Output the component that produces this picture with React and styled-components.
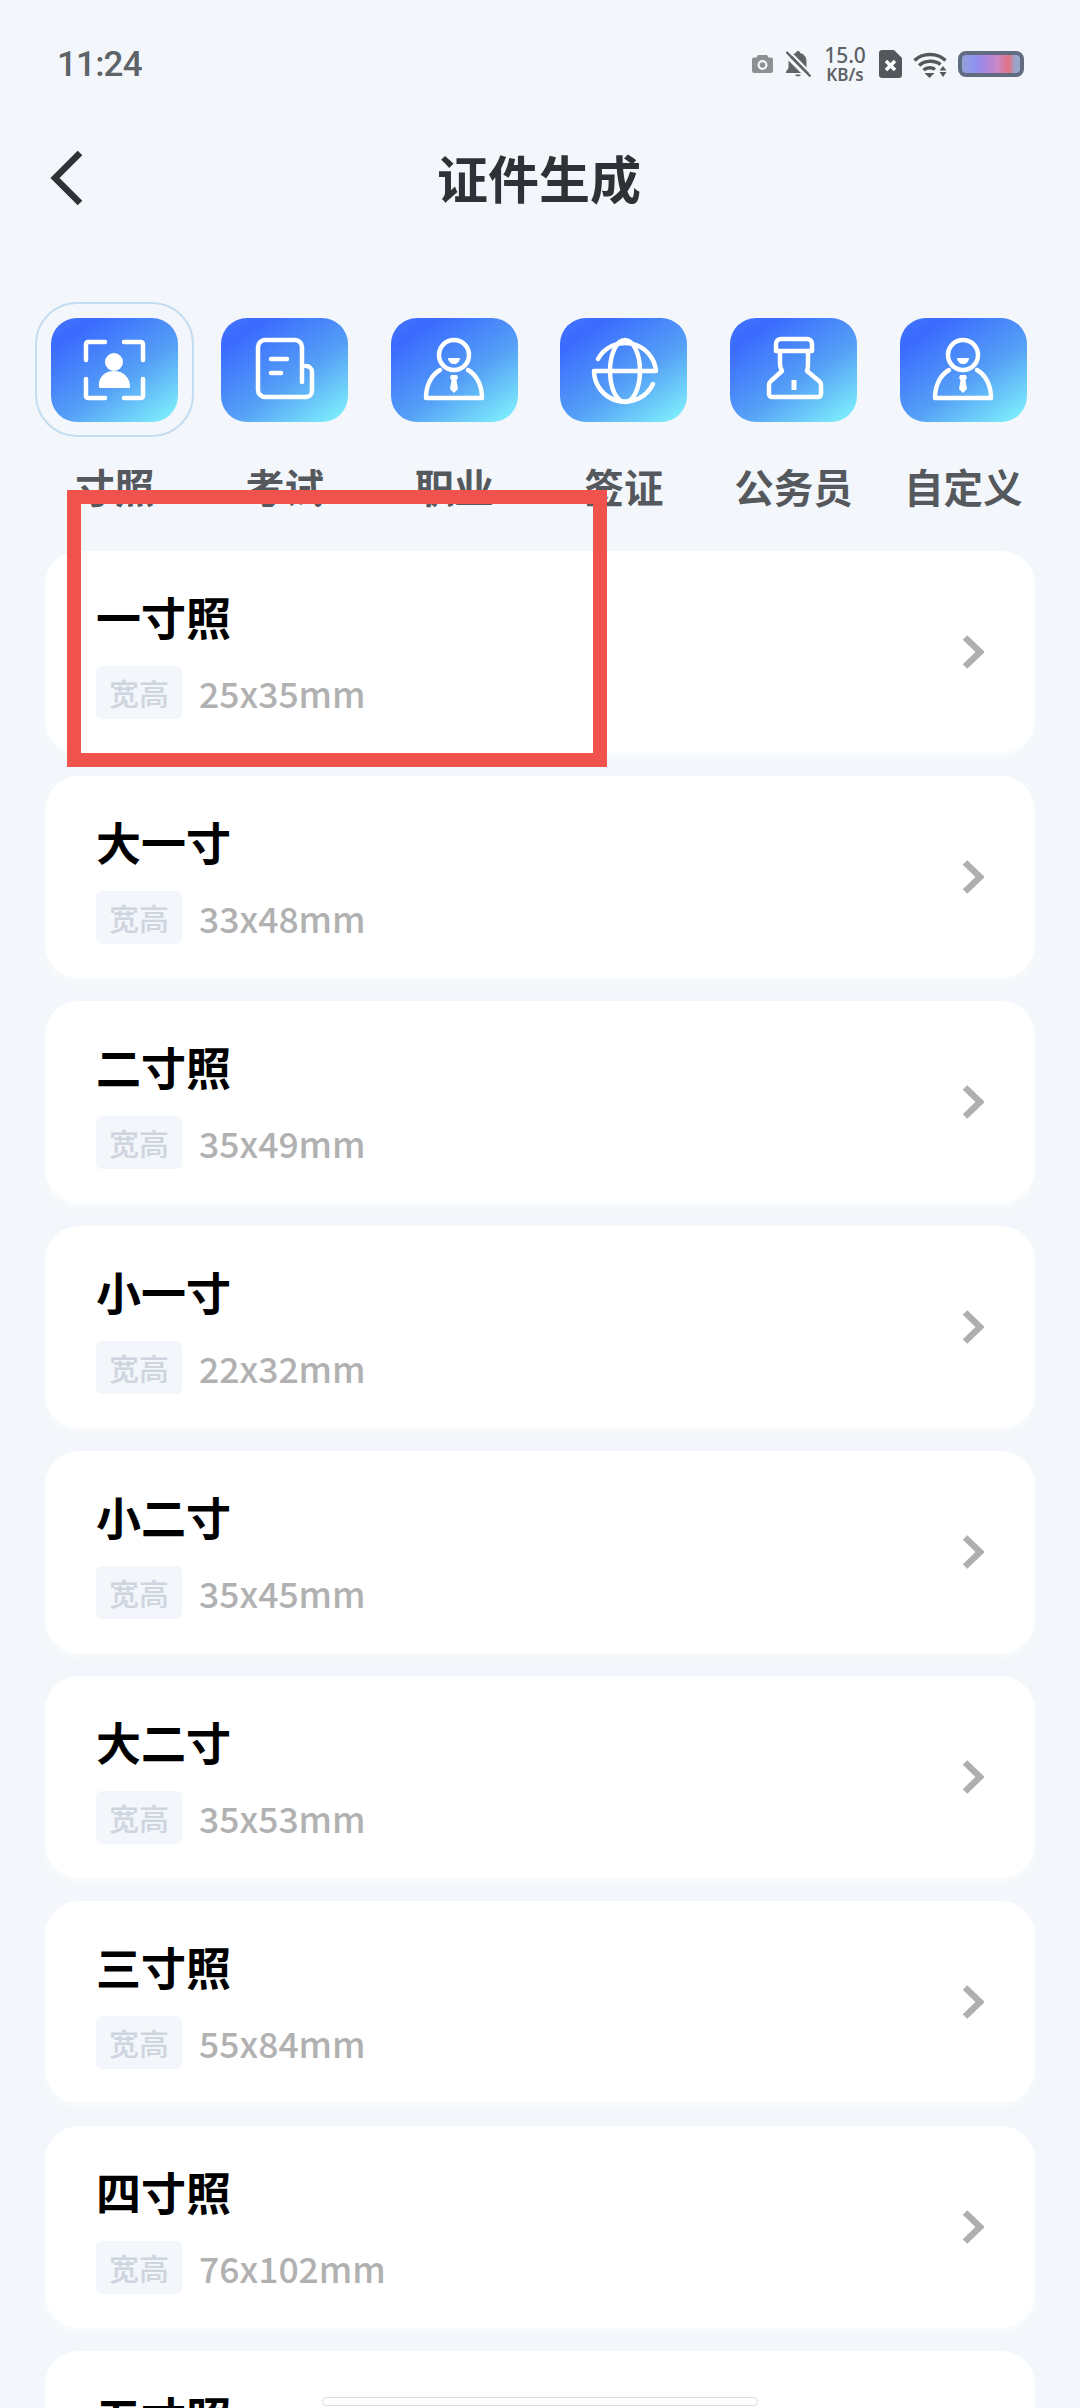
import React from 'react'
import styled, { createGlobalStyle } from 'styled-components'

const GlobalStyle = createGlobalStyle`
  html, body {
    margin: 0;
    padding: 0;
    background: #f3f7fb;
  }
  * {
    box-sizing: border-box;
  }
`

const Page = styled.div`
  position: relative;
  width: 1080px;
  height: 2408px;
  overflow: hidden;
  background: #f3f7fb;
  font-family: 'Noto Sans CJK SC', 'Noto Sans', sans-serif;
`

const StatusBar = styled.div`
  display: flex;
  align-items: center;
  justify-content: space-between;
  height: 128px;
  padding: 0 57px;
`

const Time = styled.span`
  font-family: Roboto, sans-serif;
  font-size: 35px;
  font-weight: 500;
  letter-spacing: -0.8px;
  color: #5e6367;
`

const StatusIcons = styled.div`
  display: flex;
  align-items: center;
  margin-right: -1px;
`

const Speed = styled.div`
  display: flex;
  flex-direction: column;
  align-items: center;
  gap: 2px;
  width: 42px;
  margin: 0 13px 0 12px;
  font-family: 'Noto Sans', sans-serif;
  font-weight: 500;
  color: #5e6367;
`

const SpeedValue = styled.span`
  font-size: 21px;
  line-height: 19px;
`

const SpeedUnit = styled.span`
  font-size: 17px;
  font-weight: 600;
  line-height: 16px;
  white-space: nowrap;
`

const Battery = styled.div`
  width: 66px;
  height: 26px;
  margin-left: 11px;
  border: 4px solid #626c80;
  border-radius: 8px;
  background: linear-gradient(
    90deg,
    #94a2dc 0%,
    #8f8ff0 25%,
    #b184d8 45%,
    #cc88c4 62%,
    #e36f80 80%,
    #98a6cc 92%
  );
`

const NavBar = styled.div`
  position: relative;
  display: flex;
  align-items: center;
  justify-content: center;
  height: 100px;
`

const BackButton = styled.svg`
  position: absolute;
  left: 49px;
  top: 23px;
`

const Title = styled.h1`
  margin: -3px 2px 0 0;
  font-size: 51px;
  line-height: 60px;
  font-weight: 700;
  color: #2e3236;
`

const Tabs = styled.div`
  display: flex;
  margin-top: 90px;
  padding-left: 30px;
`

const Tab = styled.div`
  display: flex;
  flex-direction: column;
  align-items: center;
  width: 169.7px;
`

const IconTile = styled.div`
  position: relative;
  display: flex;
  width: 127px;
  height: 104px;
  border-radius: 26px;
  background: linear-gradient(146deg, #4576fb 0%, #3a6aff 16%, #55a0f6 58%, #7ae7fb 92%);

  ${props =>
    props.$selected &&
    `
    &::before {
      content: '';
      position: absolute;
      inset: -16px -16px -15px -16px;
      border: 2px solid #c4dcf0;
      border-radius: 42px;
    }
  `}
`

const TabLabel = styled.span`
  margin-top: 40px;
  font-size: 39.5px;
  line-height: 48px;
  font-weight: 700;
  color: #55595e;
  white-space: nowrap;
`

const List = styled.div`
  display: flex;
  flex-direction: column;
  gap: 23px;
  margin-top: 41px;
  padding: 0 45px;
`

const Card = styled.div`
  display: flex;
  flex: none;
  align-items: center;
  justify-content: space-between;
  height: 202px;
  padding: 0 51px;
  border-radius: 34px;
  background: #fff;
  box-shadow: 0 5px 6px rgba(255, 255, 255, 0.45);
`

const CardText = styled.div`
  display: flex;
  flex-direction: column;
  margin-top: 1px;
`

const CardTitle = styled.div`
  font-size: 45px;
  line-height: 60px;
  font-weight: 700;
  color: #000;
`

const SizeRow = styled.div`
  display: flex;
  align-items: center;
  margin-top: 19px;
`

const SizeBadge = styled.span`
  display: flex;
  align-items: center;
  justify-content: center;
  width: 86px;
  height: 53px;
  border-radius: 6px;
  background: #f3f6fb;
  font-size: 30px;
  font-weight: 500;
  color: #cfd5df;
`

const SizeValue = styled.span`
  margin-left: 17px;
  font-size: 35.5px;
  font-weight: 500;
  color: #b1b1b1;
`

const Chevron = styled.svg`
  margin-top: -1px;
`

const Highlight = styled.div`
  position: absolute;
  left: 67px;
  top: 490px;
  width: 540px;
  height: 277px;
  border: 14px solid #f0534d;
`

const FloatingBar = styled.div`
  position: absolute;
  left: 322px;
  top: 2397px;
  width: 436px;
  height: 9px;
  border: 1px solid #dcdcdc;
  border-radius: 4px;
  background: #fff;
`

const TileSvg = ({ children }) => (
  <svg
    width="127"
    height="104"
    viewBox="0 0 127 104"
    fill="none"
    stroke="#fff"
    strokeWidth="4.5"
    strokeLinecap="round"
    strokeLinejoin="round"
  >
    {children}
  </svg>
)

const ScanIcon = () => (
  <TileSvg>
    <path d="M54 24H37a2 2 0 0 0-2 2V42" />
    <path d="M73 24H90a2 2 0 0 1 2 2V42" />
    <path d="M35 61V78a2 2 0 0 0 2 2H54" />
    <path d="M92 61V78a2 2 0 0 1-2 2H73" />
    <circle cx="63" cy="44" r="9" fill="#fff" stroke="none" />
    <path
      d="M49 69c-1-9 5-15 14-15s15 6 15 15H49z"
      fill="#fff"
      stroke="#fff"
      strokeWidth="2"
    />
  </TileSvg>
)

const DocIcon = () => (
  <TileSvg>
    <path d="M81 64V29a7 7 0 0 0-7-7H44a7 7 0 0 0-7 7V72a7 7 0 0 0 7 7H85a6 6 0 0 0 6-6V54a6 6 0 0 0-6-6" />
    <path d="M50 41H66" />
    <path d="M50 55H60" />
  </TileSvg>
)

const PersonIcon = () => (
  <TileSvg>
    <circle cx="63" cy="37" r="15" />
    <path d="M57 40h12c-.5 4-3 6-6 6s-5.500-2-6-6z" fill="#fff" stroke="none" />
    <path d="M49 52C40 57 35 68 35 80H91C91 68 86 57 77 52" />
    <path d="M60 57h6l1 3-1.500 2 1.500 9-4 4-4-4 1.500-9-1.500-2z" fill="#fff" stroke="none" />
  </TileSvg>
)

const GlobeIcon = () => (
  <TileSvg>
    <path d="M38 41A31 31 0 0 1 96 53H34A31 31 0 0 0 93 66" />
    <ellipse cx="65" cy="53" rx="15" ry="31" />
  </TileSvg>
)

const OfficerIcon = () => (
  <TileSvg>
    <path d="M46 33V26a5 5 0 0 1 5-5H77a5 5 0 0 1 5 5V33H46z" />
    <path d="M50 33V46C50 49 51 51 52 53L41 63a5 5 0 0 0-2 4V76a3 3 0 0 0 3 3H88a3 3 0 0 0 3-3V67a5 5 0 0 0-2-4L77 53C78 51 78 49 78 46V33" />
    <path d="M64 62V72" strokeWidth="5" strokeLinecap="butt" />
  </TileSvg>
)

const tabs = [
  { label: '寸照', Icon: ScanIcon, selected: true },
  { label: '考试', Icon: DocIcon },
  { label: '职业', Icon: PersonIcon },
  { label: '签证', Icon: GlobeIcon },
  { label: '公务员', Icon: OfficerIcon },
  { label: '自定义', Icon: PersonIcon },
]

const sizes = [
  ['一寸照', '25x35mm'],
  ['大一寸', '33x48mm'],
  ['二寸照', '35x49mm'],
  ['小一寸', '22x32mm'],
  ['小二寸', '35x45mm'],
  ['大二寸', '35x53mm'],
  ['三寸照', '55x84mm'],
  ['四寸照', '76x102mm'],
  ['五寸照', '89x127mm'],
]

const App = () => {
  return (
    <Page>
      <GlobalStyle />
      <StatusBar>
        <Time>11:24</Time>
        <StatusIcons>
          <svg width="21" height="18" viewBox="0 0 21 18">
            <path
              fill="#8d8f91"
              fillRule="evenodd"
              d="M6 0h9l1.500 2.500H19a2 2 0 0 1 2 2V16a2 2 0 0 1-2 2H2a2 2 0 0 1-2-2V4.500a2 2 0 0 1 2-2h2.500L6 0zm4.500 5a5 5 0 1 0 0 10 5 5 0 0 0 0-10zm0 2.200a2.800 2.800 0 1 1 0 5.600 2.800 2.800 0 0 1 0-5.600z"
            />
          </svg>
          <svg width="27" height="28" viewBox="0 0 27 28" style={{ marginLeft: 12 }}>
            <path
              fill="#5e6367"
              d="M13 1c-1.500 0-2 1-2.200 2C8 3.600 6 5.500 5.500 8l15 15H24c.5 0 .8-.6.300-1.200L21.500 18v-7c0-4-2.500-7-6.300-8C15 2 14.500 1 13 1zM3.500 10.500V18L1 21.800C.6 22.500 1 23 1.500 23H16L3.500 10.500zM10 24.500a3.300 3.300 0 0 0 6 0h-6z"
            />
            <path d="M1.500 2L25.500 26.500" stroke="#5e6367" strokeWidth="2.500" />
            <path d="M4.500 1.500L27 24.500" stroke="#f3f7fb" strokeWidth="2" />
          </svg>
          <Speed>
            <SpeedValue>15.0</SpeedValue>
            <SpeedUnit>KB/s</SpeedUnit>
          </Speed>
          <svg width="23" height="28" viewBox="0 0 23 28">
            <path fill="#54585c" d="M3 0h12l8 8v17a3 3 0 0 1-3 3H3a3 3 0 0 1-3-3V3a3 3 0 0 1 3-3z" />
            <path d="M7 11l9 9M16 11l-9 9" stroke="#fff" strokeWidth="3.500" />
          </svg>
          <svg width="34" height="27" viewBox="0 0 34 27" fill="none" style={{ marginLeft: 11 }}>
            <path d="M1.500 9.500C9.500 1.500 24.500 1.500 32.500 9.500" stroke="#54585c" strokeWidth="3.500" />
            <path d="M6 14.500C12 9 22 9 27.500 13.500" stroke="#54585c" strokeWidth="3.500" />
            <path d="M10.500 19C14 16 19 16 22 18.500" stroke="#54585c" strokeWidth="3.500" />
            <path d="M11.500 22h10l-5 5z" fill="#54585c" />
            <path d="M30 15l3.500 4.500h-7zM26.500 21h7L30 26z" fill="#54585c" />
          </svg>
          <Battery />
        </StatusIcons>
      </StatusBar>

      <NavBar>
        <BackButton width="36" height="56" viewBox="0 0 36 56" fill="none">
          <path d="M31 3L6 28l25 25" stroke="#2e3236" strokeWidth="6.500" transform="translate(0 -1)" />
        </BackButton>
        <Title>证件生成</Title>
      </NavBar>

      <Tabs>
        {tabs.map(({ label, Icon, selected }) => (
          <Tab key={label}>
            <IconTile $selected={selected}>
              <Icon />
            </IconTile>
            <TabLabel>{label}</TabLabel>
          </Tab>
        ))}
      </Tabs>

      <List>
        {sizes.map(([name, size]) => (
          <Card key={name}>
            <CardText>
              <CardTitle>{name}</CardTitle>
              <SizeRow>
                <SizeBadge>宽高</SizeBadge>
                <SizeValue>{size}</SizeValue>
              </SizeRow>
            </CardText>
            <Chevron width="22" height="34" viewBox="0 0 22 34" fill="none">
              <path d="M3 2.500L18 17 3 31.500" stroke="#afafaf" strokeWidth="6.500" />
            </Chevron>
          </Card>
        ))}
      </List>

      <Highlight />
      <FloatingBar />
    </Page>
  )
}

export default App
